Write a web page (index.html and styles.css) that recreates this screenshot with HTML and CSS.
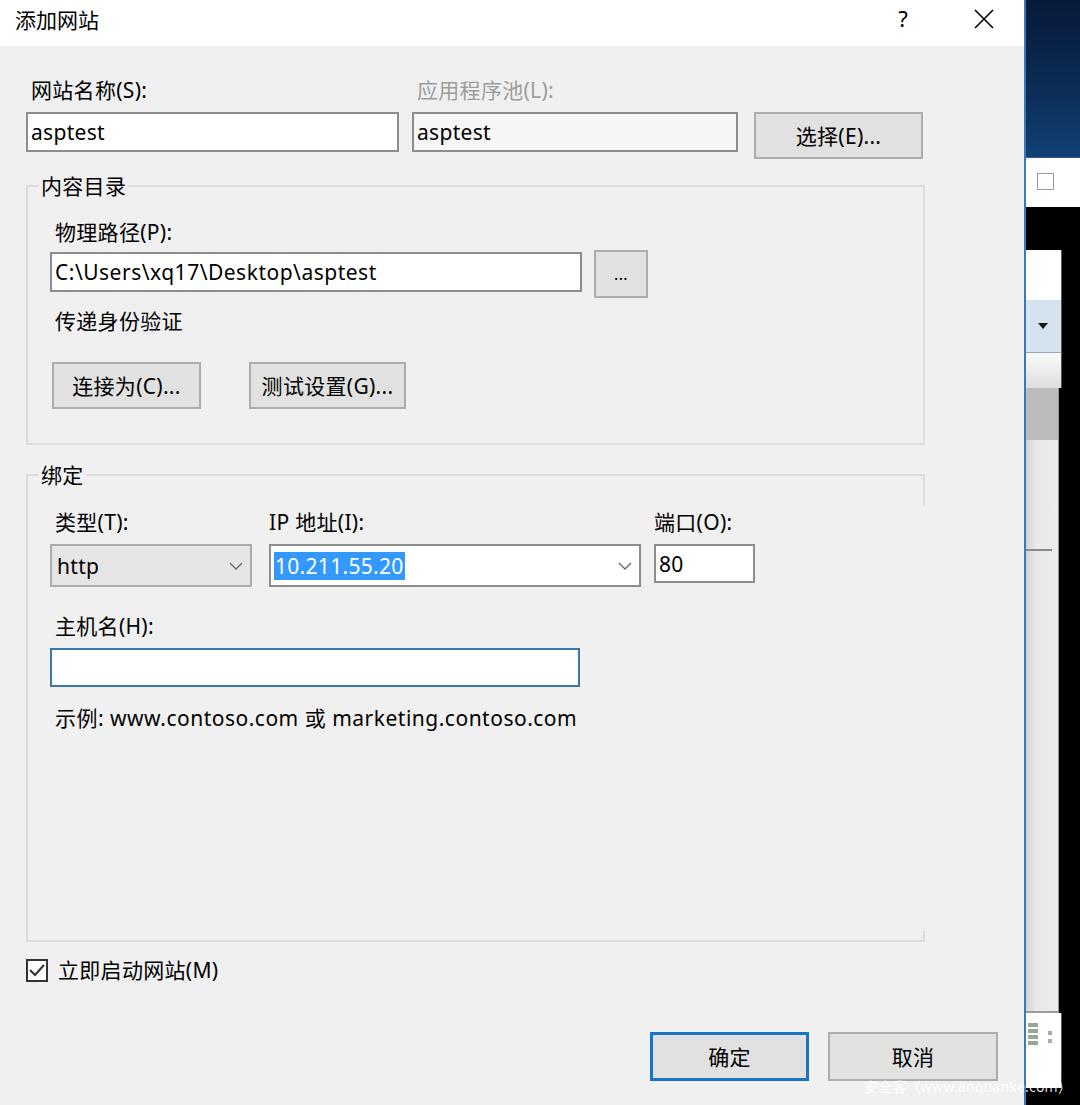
FILE: index.html
```html
<!DOCTYPE html>
<html lang="zh-CN">
<head>
<meta charset="utf-8">
<title>添加网站</title>
<link rel="stylesheet" href="styles.css">
</head>
<body>
<div class="screen">
  <div class="dialog">
    <div class="titlebar">
      <span class="title">添加网站</span>
      <span class="help">?</span>
      <span class="close"><svg width="20" height="20" viewBox="0 0 20 20"><path d="M1 1 L19 19 M19 1 L1 19" stroke="#000" stroke-width="1.6" fill="none"/></svg></span>
    </div>
    <div class="body">
      <div class="row-labels">
        <div class="label pad l-name">网站名称(S):</div>
        <div class="label pad disabled">应用程序池(L):</div>
      </div>
      <div class="row-controls">
        <div class="textbox tb-name">asptest</div>
        <div class="textbox tb-pool">asptest</div>
        <button class="btn btn-select">选择(E)...</button>
      </div>

      <div class="group g-content">
        <span class="legend">内容目录</span>
        <div class="label pad">物理路径(P):</div>
        <div class="path-row">
          <div class="textbox tb-path">C:\Users\xq17\Desktop\asptest</div>
          <button class="btn btn-browse">...</button>
        </div>
        <div class="label pad auth-label">传递身份验证</div>
        <div class="auth-buttons">
          <button class="btn btn-connect">连接为(C)...</button>
          <button class="btn btn-test">测试设置(G)...</button>
        </div>
      </div>

      <div class="group g-bind">
        <span class="legend">绑定</span>
        <div class="bind-row">
          <div class="bcol bcol-type">
            <div class="label pad">类型(T):</div>
            <div class="select">
              <span>http</span>
              <svg class="chev" width="14" height="8" viewBox="0 0 14 8"><path d="M1 1 L7 7 L13 1" stroke="#666" stroke-width="1.3" fill="none"/></svg>
            </div>
          </div>
          <div class="bcol bcol-ip">
            <div class="label">IP 地址(I):</div>
            <div class="combo">
              <span class="sel">10.211.55.20</span>
              <svg class="chev" width="14" height="8" viewBox="0 0 14 8"><path d="M1 1 L7 7 L13 1" stroke="#666" stroke-width="1.3" fill="none"/></svg>
            </div>
          </div>
          <div class="bcol bcol-port">
            <div class="label">端口(O):</div>
            <div class="textbox tb-port">80</div>
          </div>
        </div>
        <div class="label pad host-label">主机名(H):</div>
        <div class="textbox tb-host"></div>
        <div class="label pad example">示例: www.contoso.com 或 marketing.contoso.com</div>
      </div>

      <div class="check-row">
        <span class="checkbox"><svg width="18" height="19" viewBox="0 0 18 19"><path d="M2 9 L7 14 L16 4" stroke="#333" stroke-width="2" fill="none"/></svg></span>
        <span class="check-label">立即启动网站(M)</span>
      </div>

      <div class="footer">
        <button class="btn btn-ok">确定</button>
        <button class="btn btn-cancel">取消</button>
      </div>
    </div>
  </div>

  <div class="desktop">
    <div class="d-sky"></div>
    <div class="d-bar"><span class="d-check"></span></div>
    <div class="d-gap"></div>
    <div class="d-win">
      <div class="d-pane">
        <div class="p-white"></div>
        <div class="p-blue"><span class="p-arrow"></span></div>
        <div class="p-fade"></div>
        <div class="p-grey"></div>
        <div class="p-list"><div class="p-line"></div></div>
        <div class="p-foot">
          <span class="p-icon"><i></i><i></i><i></i><i></i></span>
          <span class="p-dots"><i></i><i></i></span>
        </div>
      </div>
    </div>
  </div>

  <div class="watermark">安全客（www.anquanke.com）</div>
</div>
</body>
</html>
```

FILE: styles.css
```css
* { box-sizing: border-box; }
html, body { margin: 0; padding: 0; }
body {
  width: 1080px;
  height: 1105px;
  overflow: hidden;
  background: #000;
  font-family: "Noto Sans", "Noto Sans CJK SC", sans-serif;
  font-size: 21px;
  line-height: 24px;
  letter-spacing: 0.3px;
  color: #000;
}
.screen {
  position: relative;
  display: flex;
  width: 1080px;
  height: 1105px;
}

/* ---------- dialog ---------- */
.dialog {
  width: 1026px;
  height: 1105px;
  flex: none;
  border-right: 2px solid #3a79b6;
  background: #f0f0f0;
  display: flex;
  flex-direction: column;
}
.titlebar {
  height: 46px;
  flex: none;
  background: #fff;
  display: flex;
  align-items: flex-start;
  padding-top: 8px;
}
.title { margin-left: 15px; flex: 1; letter-spacing: 0; }
.help { font-size: 22px; line-height: 22px; margin-top: -1px; margin-right: 66px; }
.close { margin-top: 1px; margin-right: 30px; height: 20px; }
.close svg { display: block; }

.body {
  flex: 1;
  display: flex;
  flex-direction: column;
  padding: 32px 26px 0 26px;
}
.label { height: 24px; line-height: 24px; white-space: nowrap; }
.pad { padding-left: 5px; }
.disabled { color: #9d9d9d; }

.row-labels { display: flex; }
.l-name { width: 386px; }
.row-controls { display: flex; align-items: flex-start; margin-top: 10px; }

.textbox {
  height: 40px;
  border: 2px solid #8d8d8d;
  background: #fff;
  padding-left: 3px;
  display: flex;
  align-items: center;
  white-space: nowrap;
}
.tb-name { width: 373px; margin-right: 13px; }
.tb-pool { width: 326px; margin-right: 16px; background: #f6f6f6; }

.btn {
  font: inherit;
  line-height: 24px;
  letter-spacing: inherit;
  color: #000;
  background: #e1e1e1;
  border: 2px solid #adadad;
  padding: 0;
  margin: 0;
}
.btn-select { width: 169px; height: 47px; }

/* group boxes */
.group {
  position: relative;
  width: 899px;
  border: 2px solid #dcdcdc;
}
.legend {
  position: absolute;
  left: 11px;
  top: -13px;
  padding: 0 2px;
  line-height: 24px;
  background: #f0f0f0;
}
.g-content {
  margin-top: 26px;
  padding: 33px 0 34px 22px;
}
.path-row { display: flex; align-items: flex-start; margin-top: 6px; }
.tb-path { width: 532px; margin-top: 2px; letter-spacing: 0.5px; }
.btn-browse { width: 54px; height: 48px; margin-left: 12px; font-size: 16px; }
.auth-label { margin-top: 11px; }
.auth-buttons { display: flex; margin-top: 29px; }
.btn-connect { width: 149px; height: 47px; margin-left: 2px; }
.btn-test { width: 157px; height: 47px; margin-left: 48px; }

.g-bind {
  margin-top: 29px;
  padding: 34px 0 210px 22px;
  border-right-color: transparent;
}
.g-bind::before,
.g-bind::after {
  content: "";
  position: absolute;
  right: -2px;
  width: 2px;
  background: #dcdcdc;
}
.g-bind::before { top: -2px; height: 32px; }
.g-bind::after { bottom: -2px; height: 11px; }

.bind-row { display: flex; align-items: flex-start; }
.bcol-type { width: 202px; }
.bcol-ip { width: 372px; margin-left: 17px; }
.bcol-port { width: 101px; margin-left: 13px; }

.select,
.combo {
  margin-top: 10px;
  height: 43px;
  display: flex;
  align-items: center;
  justify-content: space-between;
  padding-right: 7px;
}
.select {
  background: #e5e5e5;
  border: 2px solid #adadad;
  padding-left: 5px;
}
.combo {
  background: #fff;
  border: 2px solid #8d8d8d;
  padding-left: 3px;
}
.chev { display: block; }
.sel {
  background: #3399ff;
  color: #fff;
  height: 28px;
  line-height: 28px;
  padding: 0 1px;
}
.tb-port { margin-top: 10px; height: 39px; }

.host-label { margin-top: 27px; }
.tb-host { margin-top: 10px; width: 530px; height: 39px; border-color: #3b78aa; }
.example { margin-top: 19px; letter-spacing: 0.5px; }

.check-row {
  display: flex;
  align-items: center;
  height: 24px;
  margin-top: 16px;
}
.checkbox {
  width: 22px;
  height: 23px;
  border: 2px solid #333;
  background: #fff;
}
.checkbox svg { display: block; }
.check-label { margin-left: 10px; }

.footer {
  display: flex;
  justify-content: flex-end;
  margin-top: 50px;
}
.btn-ok { width: 159px; height: 49px; border: 3px solid #1a74c6; }
.btn-cancel { width: 170px; height: 49px; margin-left: 19px; }

/* ---------- desktop strip ---------- */
.desktop {
  flex: 1;
  display: flex;
  flex-direction: column;
  background: #000;
}
.d-sky {
  height: 158px;
  background: linear-gradient(180deg, #07193a 0%, #0b2e58 60%, #114174 100%);
  border-bottom: 1px solid #2a5a8a;
}
.d-bar {
  height: 49px;
  background: #fff;
  padding: 15px 0 0 11px;
}
.d-check {
  display: block;
  width: 17px;
  height: 17px;
  border: 1.5px solid #9a9a9a;
}
.d-gap { height: 43px; }
.d-win { flex: 1; display: flex; }
.d-pane {
  width: 36px;
  flex: none;
  display: flex;
  flex-direction: column;
}
.p-white { height: 50px; background: #fff; border-right: 1px solid #555; }
.p-blue {
  height: 53px;
  background: #d5e3f1;
  border-right: 1px solid #555;
  border-bottom: 1px solid #9aa8b8;
  display: flex;
  align-items: center;
  padding-left: 12px;
}
.p-arrow {
  width: 0;
  height: 0;
  border-left: 5px solid transparent;
  border-right: 5px solid transparent;
  border-top: 6px solid #111;
}
.p-fade { height: 35px; background: linear-gradient(180deg, #fafafa, #dedede); border-right: 1px solid #555; }
.p-grey { height: 52px; width: 33px; background: #bdbcbd; border-right: 1px solid #999; }
.p-list {
  position: relative;
  height: 573px;
  width: 33px;
  background: linear-gradient(90deg, #d2d2d2 0%, #e9e9e9 30%, #ececec 100%);
  border-right: 1px solid #999;
  border-bottom: 2px solid #9b9b9b;
}
.p-line { margin-top: 109px; width: 26px; height: 2px; background: #8a8a8a; }
.p-foot {
  height: 75px;
  background: #fff;
  border-right: 1px solid #555;
  display: flex;
  align-items: flex-start;
  padding: 10px 0 0 2px;
}
.p-icon { display: flex; flex-direction: column; gap: 2px; width: 10px; }
.p-icon i { display: block; height: 4px; background: #9aa59a; }
.p-dots { display: flex; flex-direction: column; gap: 4px; margin: 8px 0 0 10px; }
.p-dots i { display: block; width: 4px; height: 4px; background: #aaa; }

.watermark {
  position: absolute;
  left: 864px;
  top: 1076px;
  font-size: 14px;
  line-height: 22px;
  letter-spacing: 0.2px;
  color: rgba(255, 255, 255, 0.88);
  white-space: nowrap;
}
```
